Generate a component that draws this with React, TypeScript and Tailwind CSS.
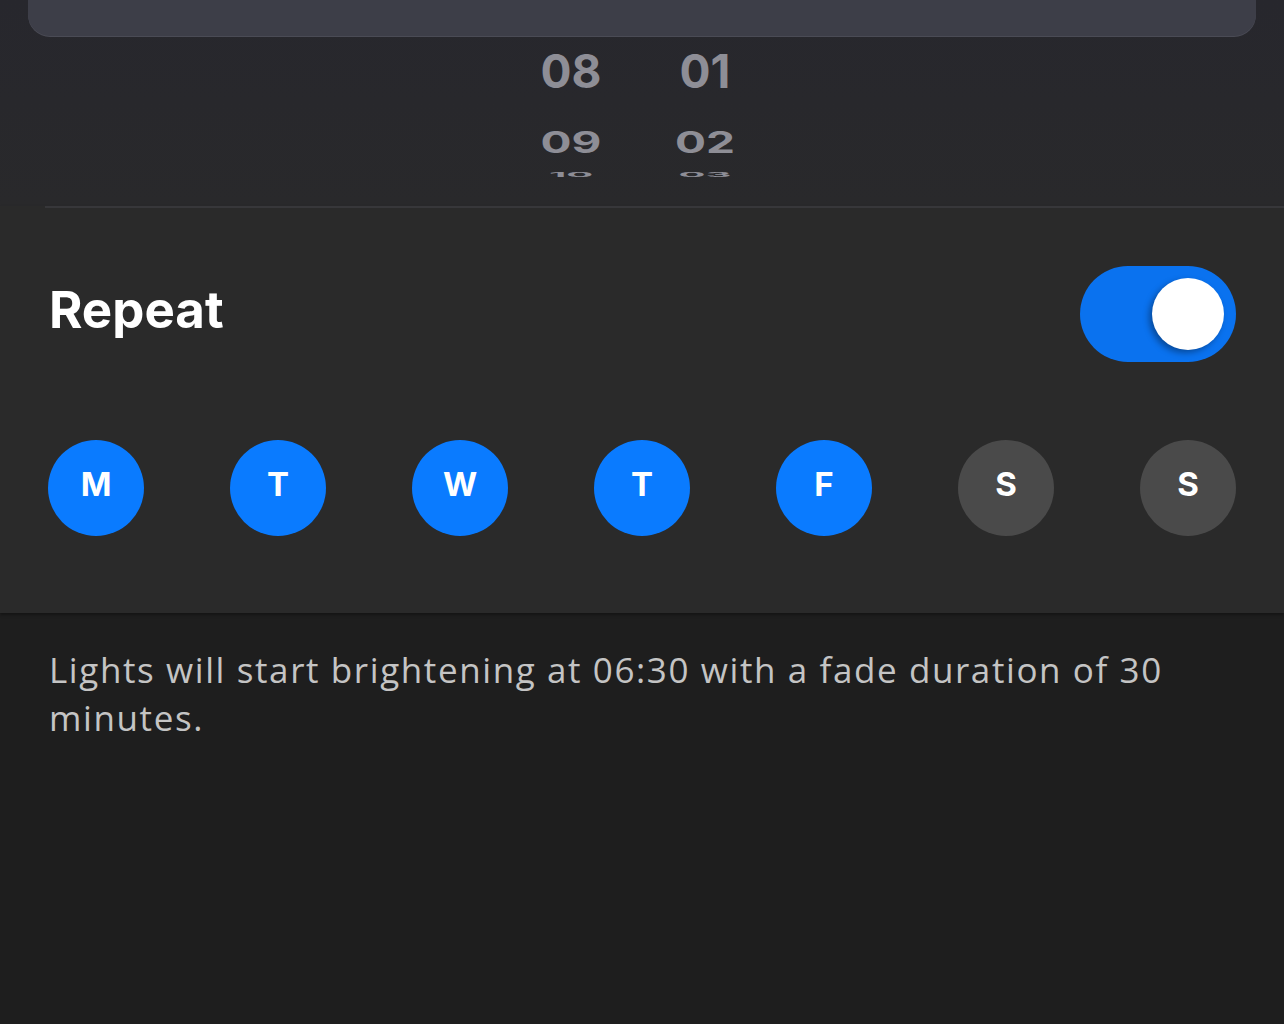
const days = [
  { label: "M", on: true },
  { label: "T", on: true },
  { label: "W", on: true },
  { label: "T", on: true },
  { label: "F", on: true },
  { label: "S", on: false },
  { label: "S", on: false },
];

function PickerColumn({ values }: { values: string[] }) {
  return (
    <div className="flex w-[134px] flex-col items-center">
      <div className="h-[50px] text-[46px] font-bold leading-[50px] text-[#8e8e96]">
        {values[0]}
      </div>
      <div className="mt-[35px] h-[30px] origin-top scale-y-[0.64] text-[46px] font-bold leading-[34px] text-[#8e8e96]">
        {values[1]}
      </div>
      <div className="mt-[11px] h-[8px] origin-top scale-y-[0.15] text-[40px] font-bold leading-[40px] text-[#8e8e96]">
        {values[2]}
      </div>
    </div>
  );
}

export default function App() {
  return (
    <div
      className="flex h-[1024px] w-full flex-col bg-[#1e1e1e]"
      style={{ fontFamily: "Inter, 'Open Sans', sans-serif" }}
    >
      {/* time picker remnant */}
      <div className="h-[206px] bg-gradient-to-b from-[#27272d] to-[#29292b]">
        <div className="mx-[28px] h-[36px] rounded-b-[22px] bg-[#3d3e48] shadow-[0_1px_0_#4a4b55]" />
        <div className="ml-[504px] mt-[10px] flex">
          <PickerColumn values={["08", "09", "10"]} />
          <PickerColumn values={["01", "02", "03"]} />
        </div>
      </div>

      {/* repeat section */}
      <div className="bg-[#2a2a2a] shadow-[0_2px_3px_rgba(0,0,0,0.35)]">
        <div className="ml-[45px] h-[2px] bg-[#37373a]" />
        <div className="flex items-center justify-between pl-[49px] pr-[48px] pt-[58px]">
          <span className="mb-[8px] text-[51px] font-bold text-white">Repeat</span>
          <div className="flex h-[96px] w-[156px] items-center rounded-full bg-[#0a72ef] pl-[72px]">
            <div className="h-[72px] w-[72px] rounded-full bg-white shadow-[-3px_3px_6px_rgba(0,0,0,0.35)]" />
          </div>
        </div>
        <div className="flex justify-between px-[48px] pb-[77px] pt-[78px]">
          {days.map((d, i) => (
            <div
              key={i}
              className={
                "flex h-[96px] w-[96px] items-center justify-center rounded-full pb-[6px] text-[33px] font-bold text-white " +
                (d.on ? "bg-[#0a7bff]" : "bg-[#4a4a4a]")
              }
            >
              {d.label}
            </div>
          ))}
        </div>
      </div>

      {/* footer note */}
      <p
        className="px-[49px] pt-[33px] text-[35px] leading-[48px] tracking-[1.6px] text-[#c4c4c4]"
        style={{ fontFamily: "'Open Sans', sans-serif" }}
      >
        Lights will start brightening at 06:30 with a fade duration of 30 minutes.
      </p>
    </div>
  );
}
